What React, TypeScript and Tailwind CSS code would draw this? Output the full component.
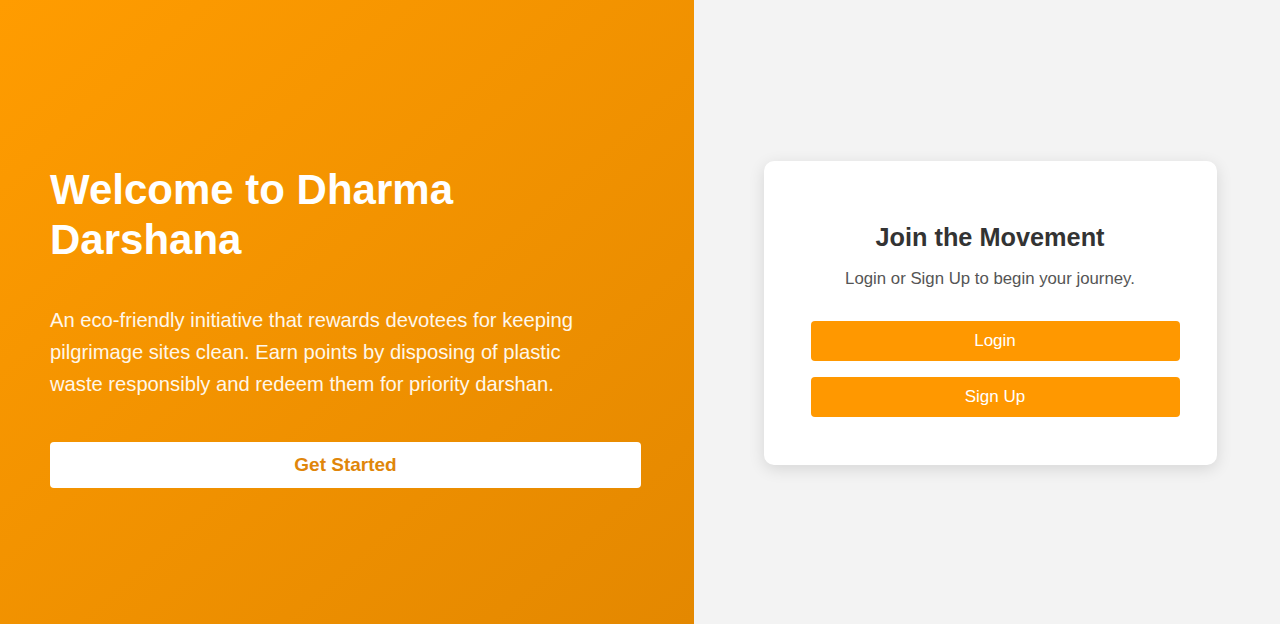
export default function App() {
  return (
    <div className="flex h-[624px] w-full font-['Liberation_Sans',Arial,sans-serif]">
      <div className="flex w-[694px] flex-col justify-center bg-linear-to-br from-[#ff9c00] to-[#e48800] px-[50px] pt-[25px] text-white">
        <h1 className="mt-[4px] text-[42px] font-bold leading-[50px]">Welcome to Dharma Darshana</h1>
        <p className="mt-[39px] max-w-[550px] text-[20.2px] leading-[32px] text-[#fff7ea]">
          An eco-friendly initiative that rewards devotees for keeping pilgrimage sites clean. Earn points by disposing of
          plastic waste responsibly and redeem them for priority darshan.
        </p>
        <button className="mt-[42px] h-[46px] w-[591px] rounded-[4px] bg-white text-[19px] font-bold text-[#e0860a]">
          Get Started
        </button>
      </div>
      <div className="flex flex-1 items-center justify-center bg-[#f3f3f3] pt-[2px] pl-[6px]">
        <div className="flex w-[453px] flex-col rounded-[10px] bg-white pt-[62px] pb-[48px] shadow-[0_4px_16px_rgba(0,0,0,0.12)]">
          <h2 className="text-center text-[25.3px] font-bold leading-[28px] text-[#333333]">Join the Movement</h2>
          <p className="mt-[18px] text-center text-[16.8px] leading-[20px] text-[#555555]">
            Login or Sign Up to begin your journey.
          </p>
          <div className="mt-[32px] ml-[47px] mr-[37px] flex flex-col gap-[16px]">
            <button className="h-[40px] rounded-[4px] bg-[#ff9800] text-[17px] text-white">Login</button>
            <button className="h-[40px] rounded-[4px] bg-[#ff9800] text-[17px] text-white">Sign Up</button>
          </div>
        </div>
      </div>
    </div>
  )
}
